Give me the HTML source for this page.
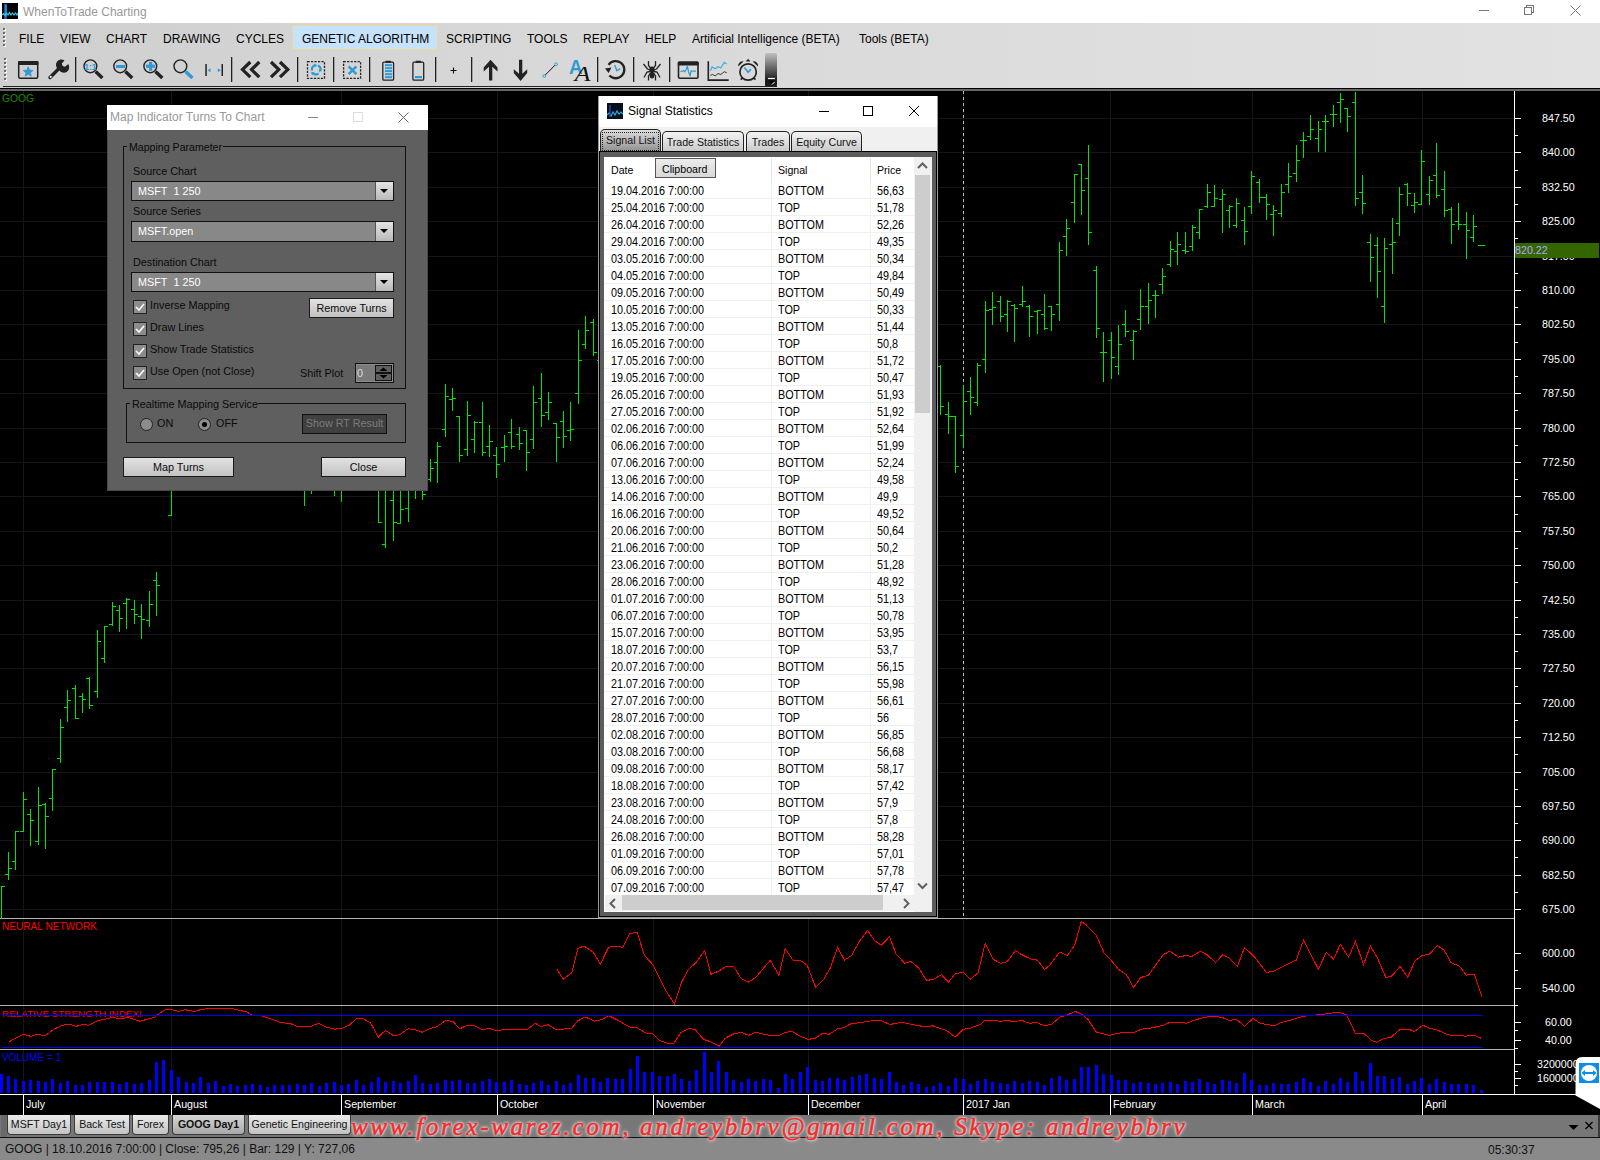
<!DOCTYPE html><html><head><meta charset="utf-8"><style>
*{margin:0;padding:0;box-sizing:border-box}
html,body{width:1600px;height:1160px;overflow:hidden;background:#000;font-family:"Liberation Sans",sans-serif;position:relative}
.a{position:absolute}
.t{position:absolute;white-space:nowrap;line-height:1}
#title{left:0;top:0;width:1600px;height:23px;background:#fff}
#menubar{left:0;top:23px;width:1600px;height:65px;background:linear-gradient(90deg,#cfcfcf 0%,#d8d8d8 35%,#e2e2e2 100%)}
.menu{font-size:12px;color:#000;top:33px}
.dlgbody{background:#5f5f5f}
.ax{font-size:10.7px;color:#fff}
.tr{font-size:10.8px;color:#000;transform:scaleY(1.1);transform-origin:0 0}
.tab{top:1115px;height:20px;border:1px solid #555;border-top:none;border-radius:0 0 4px 4px;font-size:11.5px;color:#111;text-align:center;line-height:18px;white-space:nowrap;overflow:hidden}
</style></head><body><div id="title" class="a"></div><div class="a" style="left:2px;top:3px;width:16px;height:16px;background:#000"></div><div class="t" style="left:23px;top:5.84px;font-size:12px;color:#999;">WhenToTrade Charting</div><div class="a" style="left:1479px;top:10px;width:10px;height:1px;background:#777"></div><div class="a" style="left:1526px;top:5px;width:8px;height:8px;border:1px solid #777"></div><div class="a" style="left:1524px;top:7px;width:8px;height:8px;border:1px solid #777;background:#fff"></div><svg class="a" style="left:1570px;top:5px" width="11" height="11"><path d="M0.5 0.5L10.5 10.5M10.5 0.5L0.5 10.5" stroke="#777" stroke-width="1"/></svg><div id="menubar" class="a"></div><div class="a" style="left:292px;top:25px;width:146px;height:25px;background:#c6e2fc;border:1px solid #f0d890"></div><div class="t menu" style="left:19px">FILE</div><div class="t menu" style="left:60px">VIEW</div><div class="t menu" style="left:106px">CHART</div><div class="t menu" style="left:163px">DRAWING</div><div class="t menu" style="left:236px">CYCLES</div><div class="t menu" style="left:302px">GENETIC ALGORITHM</div><div class="t menu" style="left:446px">SCRIPTING</div><div class="t menu" style="left:527px">TOOLS</div><div class="t menu" style="left:583px">REPLAY</div><div class="t menu" style="left:645px">HELP</div><div class="t menu" style="left:692px">Artificial Intelligence (BETA)</div><div class="t menu" style="left:859px">Tools (BETA)</div><svg class="a" style="left:2px;top:3px" width="16" height="16"><rect width="16" height="16" fill="#000"/><path d="M3.5 1V16" stroke="#2060d0" stroke-width="2.5"/><path d="M4 2V14" stroke="#30c8f0" stroke-width="0.8"/><path d="M0 12L1.5 10.5L3 12.5L4.5 10L6 12L7.5 9.5L9 12L10.5 10L12 12L13.5 10L15 12L16 10" stroke="#30d0f0" stroke-width="1.2" fill="none"/></svg><svg class="a" style="left:0;top:0" width="10" height="90" shape-rendering="crispEdges"><rect x="4" y="29" width="2" height="2" fill="#fff"/><rect x="3" y="28" width="2" height="2" fill="#6a6a6a"/><rect x="4" y="33" width="2" height="2" fill="#fff"/><rect x="3" y="32" width="2" height="2" fill="#6a6a6a"/><rect x="4" y="37" width="2" height="2" fill="#fff"/><rect x="3" y="36" width="2" height="2" fill="#6a6a6a"/><rect x="4" y="41" width="2" height="2" fill="#fff"/><rect x="3" y="40" width="2" height="2" fill="#6a6a6a"/><rect x="4" y="45" width="2" height="2" fill="#fff"/><rect x="3" y="44" width="2" height="2" fill="#6a6a6a"/><rect x="5" y="59" width="2" height="2" fill="#fff"/><rect x="4" y="58" width="2" height="2" fill="#6a6a6a"/><rect x="5" y="63" width="2" height="2" fill="#fff"/><rect x="4" y="62" width="2" height="2" fill="#6a6a6a"/><rect x="5" y="67" width="2" height="2" fill="#fff"/><rect x="4" y="66" width="2" height="2" fill="#6a6a6a"/><rect x="5" y="71" width="2" height="2" fill="#fff"/><rect x="4" y="70" width="2" height="2" fill="#6a6a6a"/><rect x="5" y="75" width="2" height="2" fill="#fff"/><rect x="4" y="74" width="2" height="2" fill="#6a6a6a"/><rect x="5" y="79" width="2" height="2" fill="#fff"/><rect x="4" y="78" width="2" height="2" fill="#6a6a6a"/></svg><svg class="a" style="left:0;top:0" width="800" height="90"><rect x="75" y="57" width="1.3" height="25" fill="#222"/><rect x="231" y="57" width="1.3" height="25" fill="#222"/><rect x="297" y="57" width="1.3" height="25" fill="#222"/><rect x="333" y="57" width="1.3" height="25" fill="#222"/><rect x="369" y="57" width="1.3" height="25" fill="#222"/><rect x="435" y="57" width="1.3" height="25" fill="#222"/><rect x="471" y="57" width="1.3" height="25" fill="#222"/><rect x="597" y="57" width="1.3" height="25" fill="#222"/><rect x="633" y="57" width="1.3" height="25" fill="#222"/><rect x="669" y="57" width="1.3" height="25" fill="#222"/><rect x="18.7" y="61.7" width="19" height="16.5" rx="1.5" fill="none" stroke="#222" stroke-width="1.5"/><rect x="18" y="61" width="20.5" height="4" rx="1" fill="#222"/><polygon points="28.20,66.80 29.58,70.11 33.15,70.39 30.43,72.72 31.26,76.21 28.20,74.34 25.14,76.21 25.97,72.72 23.25,70.39 26.82,70.11" fill="#2e9bd6" stroke="#2e9bd6" stroke-width="0.8" stroke-linejoin="round"/><path d="M50 77.5L60.5 67" stroke="#222" stroke-width="3.4" stroke-linecap="round"/><path d="M58.2 69.2 A5.2 5.2 0 0 1 64.5 60.4 L61.8 63.6 L62.6 66 L65 66.8 L68.2 64.1 A5.2 5.2 0 0 1 59.4 70.4 Z" fill="#222"/><circle cx="50.7" cy="76.8" r="1.1" fill="#fff"/><circle cx="90.4" cy="66.3" r="6.4" fill="none" stroke="#222" stroke-width="1.4"/><path d="M95.60000000000001 71.5L102.4 77.89999999999999" stroke="#222" stroke-width="3.4"/><text x="90.4" y="69.6" font-family="Liberation Sans" font-weight="bold" font-size="8.5" fill="#2e9bd6" text-anchor="middle">1:1</text><circle cx="120.2" cy="66.3" r="6.4" fill="none" stroke="#222" stroke-width="1.4"/><path d="M125.4 71.5L132.2 77.89999999999999" stroke="#222" stroke-width="3.4"/><rect x="116" y="65" width="9" height="3" fill="#2e9bd6"/><circle cx="150.3" cy="66.3" r="6.4" fill="none" stroke="#222" stroke-width="1.4"/><path d="M155.5 71.5L162.3 77.89999999999999" stroke="#222" stroke-width="3.4"/><rect x="146" y="64.6" width="9" height="3.2" fill="#2e9bd6"/><rect x="149" y="61.8" width="3.2" height="9" fill="#2e9bd6"/><circle cx="180.4" cy="66.3" r="6.4" fill="none" stroke="#222" stroke-width="1.4"/><path d="M185.6 71.5L192.4 77.89999999999999" stroke="#2e9bd6" stroke-width="3.4"/><rect x="205.3" y="64" width="1.5" height="12" fill="#222"/><rect x="221.5" y="64" width="1.5" height="12" fill="#222"/><path d="M207.5 70.3L210.5 68.3V72.3Z M220.8 70.3L217.8 68.3V72.3Z" fill="#2e9bd6"/><path d="M250.3 62L242.5 69.6L250.3 77.2 M259.3 62L251.5 69.6L259.3 77.2" stroke="#222" stroke-width="3.2" fill="none"/><path d="M271 62L278.8 69.6L271 77.2 M280 62L287.8 69.6L280 77.2" stroke="#222" stroke-width="3.2" fill="none"/><rect x="307.5" y="61.7" width="17" height="16.6" fill="none" stroke="#222" stroke-width="1.3" stroke-dasharray="2.2,1.3"/><path d="M312 70.5 A4.6 4.6 0 0 1 315 65.3 M318 65.6 A4.6 4.6 0 0 1 320.4 71 M318.6 73.6 A4.6 4.6 0 0 1 312.8 73" stroke="#2e9bd6" stroke-width="2.2" fill="none"/><path d="M314 63.6L317.4 65.2L314.4 67.3Z M321.8 69.6L319.6 72.6L318.6 69.4Z M312 75.4L311 71.8L314.4 72.6Z" fill="#2e9bd6"/><rect x="343.6" y="61.7" width="17" height="16.6" fill="none" stroke="#222" stroke-width="1.3" stroke-dasharray="2.2,1.3"/><path d="M348.6 66.4L356.4 74.2M356.4 66.4L348.6 74.2" stroke="#2e9bd6" stroke-width="2.4"/><rect x="382.8" y="62.2" width="10.8" height="18" rx="1.2" fill="none" stroke="#222" stroke-width="1.3"/><rect x="385.5" y="60.8" width="5.5" height="2" rx="0.6" fill="#222"/><rect x="412.9" y="62.2" width="10.8" height="18" rx="1.2" fill="none" stroke="#222" stroke-width="1.3"/><rect x="415.59999999999997" y="60.8" width="5.5" height="2" rx="0.6" fill="#222"/><rect x="385" y="64.2" width="7" height="2" fill="#2e9bd6"/><rect x="385" y="67.2" width="7" height="2" fill="#2e9bd6"/><rect x="385" y="70.1" width="7" height="2" fill="#2e9bd6"/><rect x="385" y="73.2" width="7" height="2" fill="#2e9bd6"/><rect x="385" y="76.2" width="7" height="2" fill="#2e9bd6"/><rect x="415" y="76" width="7" height="2.2" fill="#2e9bd6"/><path d="M450.5 70.5H456.5M453.5 67.5V73.5" stroke="#111" stroke-width="1.1"/><path d="M490.6 59.7L497.5 67.6L497.5 71.5L492.3 66.8V80.5H489V66.8L483.7 71.5V67.6Z" fill="#222"/><path d="M520.6 80.9L527.2 73V69.2L522.3 73.8V59.7H519V73.8L513.8 69.2V73Z" fill="#222"/><path d="M545.3 75L555 65.2" stroke="#111" stroke-width="1"/><circle cx="544.3" cy="76" r="1.4" fill="none" stroke="#2e9bd6" stroke-width="0.9"/><circle cx="556.1" cy="64.2" r="1.4" fill="none" stroke="#2e9bd6" stroke-width="0.9"/><text x="569" y="73.8" font-family="Liberation Sans" font-weight="bold" font-size="20" fill="#2e9bd6" textLength="13.5" lengthAdjust="spacingAndGlyphs">A</text><text x="574.5" y="80.5" font-family="Liberation Serif" font-style="italic" font-size="22" fill="#111" textLength="16" lengthAdjust="spacingAndGlyphs">A</text><path d="M609.4 75.5 A8.6 8.6 0 1 0 608.6 64.8" stroke="#222" stroke-width="2.3" fill="none"/><path d="M605 68.5L611.5 67.5L608.6 73Z" fill="#222"/><path d="M614.7 65.1L616.9 70.8L620.3 68.6" stroke="#2e9bd6" stroke-width="1.4" fill="none"/><ellipse cx="652" cy="69.5" rx="2.6" ry="3" fill="#222"/><ellipse cx="652" cy="75" rx="2.4" ry="3.6" fill="#222"/><path d="M648.5 61V65.5L651 68.5 M655.5 61V65.5L653 68.5 M643.5 64L647.5 69L650 70 M660.5 64L656.5 69L654 70 M644 77.5L647 72L650 71.5 M660 77.5L657 72L654 71.5 M648.5 80.5V76L650.5 73 M655.5 80.5V76L653.5 73" stroke="#222" stroke-width="1.3" fill="none"/><rect x="678.5" y="62.2" width="19.5" height="16" rx="1.2" fill="none" stroke="#222" stroke-width="1.6"/><rect x="677.8" y="61.4" width="20.8" height="4" rx="1" fill="#222"/><path d="M680.5 71.5L682.5 71.2L683.7 70.5L684.8 71.8L686 69.8L687.4 66.5L688.6 72L690 75.5L691.2 70.8L692.5 71.2L696 71.2" stroke="#2e9bd6" stroke-width="1.2" fill="none"/><path d="M708.3 61.2V80.1H728.7" stroke="#222" stroke-width="1.6" fill="none"/><path d="M710.4 70.8L712.1 66.9L715.2 68.8L718 66.6L720.8 68L724.2 62.4L726.7 64.1" stroke="#3ab0e0" stroke-width="1.2" fill="none"/><path d="M710.4 75.3L712.7 74.5L715.2 75.9L718 73.6L720.8 74.5L724.2 71.7L726.7 72.8" stroke="#222" stroke-width="0.9" fill="none"/><circle cx="748.1" cy="72" r="8.2" fill="none" stroke="#222" stroke-width="1.7"/><path d="M738.2 66.5A4.5 4.5 0 0 1 743.5 61.4Z M758 66.5A4.5 4.5 0 0 0 752.7 61.4Z" fill="#222"/><path d="M746.5 61H749.7L748.1 59.5Z" fill="#222" stroke="#222" stroke-width="1"/><path d="M742.6 77.5L740.8 79.6 M753.6 77.5L755.4 79.6" stroke="#222" stroke-width="1.8"/><path d="M744.4 67.4L748.1 72.2L750.9 69.1" stroke="#2e9bd6" stroke-width="1.6" fill="none"/></svg><div class="a" style="left:765px;top:53px;width:12px;height:34px;background:linear-gradient(#c0c0c0,#1c1c1c 80%);border-radius:2px"></div><svg class="a" style="left:765px;top:76px" width="12" height="11"><path d="M3 2.5H10" stroke="#fff" stroke-width="1.2"/><path d="M3.5 4.5H9.5L6.5 8Z" fill="#000"/><path d="M7 8.5L9.5 6" stroke="#fff" stroke-width="1"/></svg><div class="a" style="left:3px;top:86px;width:774px;height:1px;background:#222"></div><div class="a" style="left:0;top:88px;width:1600px;height:1px;background:#000"></div><div class="a" style="left:0;top:89px;width:1600px;height:2px;background:#666"></div><svg class="a" style="left:0;top:0" width="1600" height="1160" shape-rendering="crispEdges"><rect x="0" y="118" width="1514" height="1" fill="#151515"/><rect x="0" y="152" width="1514" height="1" fill="#151515"/><rect x="0" y="187" width="1514" height="1" fill="#151515"/><rect x="0" y="221" width="1514" height="1" fill="#151515"/><rect x="0" y="256" width="1514" height="1" fill="#151515"/><rect x="0" y="290" width="1514" height="1" fill="#151515"/><rect x="0" y="324" width="1514" height="1" fill="#151515"/><rect x="0" y="359" width="1514" height="1" fill="#151515"/><rect x="0" y="393" width="1514" height="1" fill="#151515"/><rect x="0" y="428" width="1514" height="1" fill="#151515"/><rect x="0" y="462" width="1514" height="1" fill="#151515"/><rect x="0" y="496" width="1514" height="1" fill="#151515"/><rect x="0" y="531" width="1514" height="1" fill="#151515"/><rect x="0" y="565" width="1514" height="1" fill="#151515"/><rect x="0" y="600" width="1514" height="1" fill="#151515"/><rect x="0" y="634" width="1514" height="1" fill="#151515"/><rect x="0" y="668" width="1514" height="1" fill="#151515"/><rect x="0" y="703" width="1514" height="1" fill="#151515"/><rect x="0" y="737" width="1514" height="1" fill="#151515"/><rect x="0" y="772" width="1514" height="1" fill="#151515"/><rect x="0" y="806" width="1514" height="1" fill="#151515"/><rect x="0" y="840" width="1514" height="1" fill="#151515"/><rect x="0" y="875" width="1514" height="1" fill="#151515"/><rect x="0" y="909" width="1514" height="1" fill="#151515"/><rect x="23" y="91" width="1" height="1003" fill="#151515"/><rect x="171" y="91" width="1" height="1003" fill="#151515"/><rect x="341" y="91" width="1" height="1003" fill="#151515"/><rect x="497" y="91" width="1" height="1003" fill="#151515"/><rect x="653" y="91" width="1" height="1003" fill="#151515"/><rect x="808" y="91" width="1" height="1003" fill="#151515"/><rect x="963" y="91" width="1" height="1003" fill="#151515"/><rect x="1110" y="91" width="1" height="1003" fill="#151515"/><rect x="1252" y="91" width="1" height="1003" fill="#151515"/><rect x="1422" y="91" width="1" height="1003" fill="#151515"/><rect x="1514" y="91" width="1" height="1003" fill="#fff"/><rect x="1514" y="118" width="7" height="1" fill="#fff"/><rect x="1514" y="135" width="4" height="1" fill="#fff"/><rect x="1514" y="152" width="7" height="1" fill="#fff"/><rect x="1514" y="170" width="4" height="1" fill="#fff"/><rect x="1514" y="187" width="7" height="1" fill="#fff"/><rect x="1514" y="204" width="4" height="1" fill="#fff"/><rect x="1514" y="221" width="7" height="1" fill="#fff"/><rect x="1514" y="238" width="4" height="1" fill="#fff"/><rect x="1514" y="256" width="7" height="1" fill="#fff"/><rect x="1514" y="273" width="4" height="1" fill="#fff"/><rect x="1514" y="290" width="7" height="1" fill="#fff"/><rect x="1514" y="307" width="4" height="1" fill="#fff"/><rect x="1514" y="324" width="7" height="1" fill="#fff"/><rect x="1514" y="342" width="4" height="1" fill="#fff"/><rect x="1514" y="359" width="7" height="1" fill="#fff"/><rect x="1514" y="376" width="4" height="1" fill="#fff"/><rect x="1514" y="393" width="7" height="1" fill="#fff"/><rect x="1514" y="410" width="4" height="1" fill="#fff"/><rect x="1514" y="428" width="7" height="1" fill="#fff"/><rect x="1514" y="445" width="4" height="1" fill="#fff"/><rect x="1514" y="462" width="7" height="1" fill="#fff"/><rect x="1514" y="479" width="4" height="1" fill="#fff"/><rect x="1514" y="496" width="7" height="1" fill="#fff"/><rect x="1514" y="514" width="4" height="1" fill="#fff"/><rect x="1514" y="531" width="7" height="1" fill="#fff"/><rect x="1514" y="548" width="4" height="1" fill="#fff"/><rect x="1514" y="565" width="7" height="1" fill="#fff"/><rect x="1514" y="582" width="4" height="1" fill="#fff"/><rect x="1514" y="600" width="7" height="1" fill="#fff"/><rect x="1514" y="617" width="4" height="1" fill="#fff"/><rect x="1514" y="634" width="7" height="1" fill="#fff"/><rect x="1514" y="651" width="4" height="1" fill="#fff"/><rect x="1514" y="668" width="7" height="1" fill="#fff"/><rect x="1514" y="686" width="4" height="1" fill="#fff"/><rect x="1514" y="703" width="7" height="1" fill="#fff"/><rect x="1514" y="720" width="4" height="1" fill="#fff"/><rect x="1514" y="737" width="7" height="1" fill="#fff"/><rect x="1514" y="754" width="4" height="1" fill="#fff"/><rect x="1514" y="772" width="7" height="1" fill="#fff"/><rect x="1514" y="789" width="4" height="1" fill="#fff"/><rect x="1514" y="806" width="7" height="1" fill="#fff"/><rect x="1514" y="823" width="4" height="1" fill="#fff"/><rect x="1514" y="840" width="7" height="1" fill="#fff"/><rect x="1514" y="857" width="4" height="1" fill="#fff"/><rect x="1514" y="875" width="7" height="1" fill="#fff"/><rect x="1514" y="892" width="4" height="1" fill="#fff"/><rect x="1514" y="909" width="7" height="1" fill="#fff"/><rect x="1514" y="953" width="7" height="1" fill="#fff"/><rect x="1514" y="988" width="7" height="1" fill="#fff"/><rect x="1514" y="1022" width="7" height="1" fill="#fff"/><rect x="1514" y="1040" width="7" height="1" fill="#fff"/><rect x="1514" y="1064" width="7" height="1" fill="#fff"/><rect x="1514" y="1078" width="7" height="1" fill="#fff"/><rect x="1514" y="970" width="4" height="1" fill="#fff"/><rect x="1514" y="1005" width="4" height="1" fill="#fff"/><rect x="1514" y="1030" width="4" height="1" fill="#fff"/><rect x="1514" y="1048" width="4" height="1" fill="#fff"/><rect x="1514" y="1071" width="4" height="1" fill="#fff"/><rect x="1514" y="1085" width="4" height="1" fill="#fff"/><rect x="0" y="918" width="1514" height="1" fill="#b4b4b4"/><rect x="0" y="1005" width="1514" height="1" fill="#b4b4b4"/><rect x="0" y="1049" width="1514" height="1" fill="#b4b4b4"/><rect x="2" y="1015" width="1481" height="1" fill="#0000ff"/><rect x="2" y="1047" width="1481" height="1" fill="#0000ff"/><rect x="0" y="1094" width="1600" height="1" fill="#fff"/><rect x="23" y="1095" width="1" height="20" fill="#fff"/><rect x="171" y="1095" width="1" height="20" fill="#fff"/><rect x="341" y="1095" width="1" height="20" fill="#fff"/><rect x="497" y="1095" width="1" height="20" fill="#fff"/><rect x="653" y="1095" width="1" height="20" fill="#fff"/><rect x="808" y="1095" width="1" height="20" fill="#fff"/><rect x="963" y="1095" width="1" height="20" fill="#fff"/><rect x="1110" y="1095" width="1" height="20" fill="#fff"/><rect x="1252" y="1095" width="1" height="20" fill="#fff"/><rect x="1422" y="1095" width="1" height="20" fill="#fff"/><line x1="963.5" y1="91" x2="963.5" y2="918" stroke="#bdbdbd" stroke-width="1" stroke-dasharray="3,3" shape-rendering="crispEdges"/></svg><div class="t ax" style="left:1542px;top:113px">847.50</div><div class="t ax" style="left:1542px;top:147px">840.00</div><div class="t ax" style="left:1542px;top:182px">832.50</div><div class="t ax" style="left:1542px;top:216px">825.00</div><div class="t ax" style="left:1542px;top:251px">817.50</div><div class="t ax" style="left:1542px;top:285px">810.00</div><div class="t ax" style="left:1542px;top:319px">802.50</div><div class="t ax" style="left:1542px;top:354px">795.00</div><div class="t ax" style="left:1542px;top:388px">787.50</div><div class="t ax" style="left:1542px;top:423px">780.00</div><div class="t ax" style="left:1542px;top:457px">772.50</div><div class="t ax" style="left:1542px;top:491px">765.00</div><div class="t ax" style="left:1542px;top:526px">757.50</div><div class="t ax" style="left:1542px;top:560px">750.00</div><div class="t ax" style="left:1542px;top:595px">742.50</div><div class="t ax" style="left:1542px;top:629px">735.00</div><div class="t ax" style="left:1542px;top:663px">727.50</div><div class="t ax" style="left:1542px;top:698px">720.00</div><div class="t ax" style="left:1542px;top:732px">712.50</div><div class="t ax" style="left:1542px;top:767px">705.00</div><div class="t ax" style="left:1542px;top:801px">697.50</div><div class="t ax" style="left:1542px;top:835px">690.00</div><div class="t ax" style="left:1542px;top:870px">682.50</div><div class="t ax" style="left:1542px;top:904px">675.00</div><div class="t ax" style="left:1542px;top:948px">600.00</div><div class="t ax" style="left:1542px;top:983px">540.00</div><div class="t ax" style="left:1545px;top:1017px">60.00</div><div class="t ax" style="left:1545px;top:1035px">40.00</div><div class="t ax" style="left:1537px;top:1059px">3200000</div><div class="t ax" style="left:1537px;top:1073px">1600000</div><div class="a" style="left:1515px;top:243px;width:84px;height:15px;background:#336600"></div><div class="t" style="left:1515px;top:245px;font-size:10.7px;color:#b4a8ff">820.22</div><div class="t" style="left:2px;top:93.5px;font-size:10.3px;color:#1f8a00">GOOG</div><div class="t" style="left:2px;top:921.5px;font-size:10.1px;color:#ff0000">NEURAL NETWORK</div><div class="t" style="left:2px;top:1008.5px;font-size:9.9px;color:#ff0000">RELATIVE STRENGTH INDEX!</div><div class="t" style="left:2px;top:1052.5px;font-size:10px;color:#0000ff">VOLUME = 1</div><div class="t" style="left:26px;top:1099px;font-size:10.7px;color:#fff">July</div><div class="t" style="left:174px;top:1099px;font-size:10.7px;color:#fff">August</div><div class="t" style="left:344px;top:1099px;font-size:10.7px;color:#fff">September</div><div class="t" style="left:500px;top:1099px;font-size:10.7px;color:#fff">October</div><div class="t" style="left:656px;top:1099px;font-size:10.7px;color:#fff">November</div><div class="t" style="left:811px;top:1099px;font-size:10.7px;color:#fff">December</div><div class="t" style="left:966px;top:1099px;font-size:10.7px;color:#fff">2017 Jan</div><div class="t" style="left:1113px;top:1099px;font-size:10.7px;color:#fff">February</div><div class="t" style="left:1255px;top:1099px;font-size:10.7px;color:#fff">March</div><div class="t" style="left:1425px;top:1099px;font-size:10.7px;color:#fff">April</div><svg class="a" style="left:0;top:0" width="1600" height="1160" shape-rendering="crispEdges"><path d="M1.5 886V919M2 886.5H5M8.5 852V880M5 874.5H8M9 868.5H12M15.5 831V870M12 861.5H15M16 831.5H19M23.5 792V832M20 831.5H23M24 799.5H27M30.5 809V846M27 814.5H30M31 820.5H34M38.5 787V845M35 841.5H38M39 805.5H42M45.5 803V849M42 804.5H45M46 816.5H49M52.5 769V811M49 798.5H52M53 769.5H56M60.5 719V763M57 758.5H60M61 727.5H64M67.5 690V722M64 707.5H67M68 700.5H71M75.5 685V719M72 688.5H75M76 718.5H79M82.5 693V713M79 696.5H82M83 699.5H86M89.5 677V709M86 678.5H89M90 705.5H93M97.5 630V698M94 691.5H97M98 641.5H101M104.5 626V663M101 658.5H104M105 626.5H108M112.5 602V626M109 624.5H112M113 606.5H116M119.5 605V632M116 610.5H119M120 618.5H123M126.5 598V629M123 603.5H126M127 599.5H130M134.5 600V624M131 609.5H134M135 614.5H138M141.5 604V639M138 616.5H141M142 619.5H145M149.5 591V627M146 620.5H149M150 604.5H153M156.5 572V616M153 580.5H156M157 585.5H160M171.5 460V516M168 515.5H171M304.5 440V506M311.5 440V494M334.5 440V496M341.5 440V502M378.5 440V523M379 522.5H382M385.5 440V548M382 544.5H385M393.5 470V541M390 500.5H393M394 522.5H397M400.5 440V524M397 523.5H400M401 509.5H404M408.5 440V522M405 508.5H408M415.5 440V499M422.5 440V500M423 494.5H426M430.5 459V482M427 479.5H430M431 468.5H434M437.5 442V483M434 462.5H437M438 446.5H441M445.5 384V437M442 429.5H445M446 396.5H449M452.5 388V411M449 399.5H452M453 398.5H456M459.5 416V462M456 416.5H459M460 455.5H463M467.5 401V456M464 449.5H467M468 415.5H471M474.5 421V453M471 439.5H474M475 422.5H478M482.5 402V456M479 422.5H482M483 452.5H486M489.5 425V457M486 446.5H489M490 441.5H493M496.5 447V478M493 455.5H496M497 464.5H500M504.5 435V462M501 447.5H504M505 446.5H508M511.5 419V449M508 432.5H511M512 446.5H515M519.5 427V450M516 434.5H519M520 443.5H523M526.5 430V471M523 430.5H526M527 452.5H530M533.5 386V449M530 439.5H533M534 402.5H537M541.5 373V427M538 398.5H541M542 415.5H545M548.5 392V420M545 412.5H548M549 402.5H552M556.5 423V462M553 423.5H556M557 437.5H560M563.5 411V448M560 421.5H563M564 436.5H567M570.5 402V441M567 430.5H570M571 429.5H574M578.5 330V404M575 393.5H578M579 360.5H582M585.5 316V349M582 344.5H585M586 330.5H589M593.5 319V356M590 322.5H593M594 352.5H597M600.5 340V376M597 360.5H600M601 360.5H604M940.5 365V415M937 366.5H940M941 406.5H944M948.5 402V434M945 414.5H948M949 416.5H952M955.5 416V473M952 416.5H955M956 466.5H959M963.5 385V448M960 435.5H963M964 401.5H967M970.5 377V415M967 391.5H970M971 397.5H974M977.5 363V406M974 402.5H977M978 365.5H981M985.5 301V373M982 359.5H985M986 310.5H989M992.5 292V325M989 309.5H992M993 307.5H996M1000.5 296V322M997 301.5H1000M1001 316.5H1004M1007.5 300V332M1004 314.5H1007M1008 301.5H1011M1014.5 304V342M1011 305.5H1014M1015 308.5H1018M1022.5 286V307M1019 304.5H1022M1023 301.5H1026M1029.5 305V337M1026 306.5H1029M1030 316.5H1033M1037.5 310V334M1034 311.5H1037M1038 310.5H1041M1044.5 294V330M1041 314.5H1044M1045 328.5H1048M1051.5 306V331M1048 306.5H1051M1052 314.5H1055M1059.5 242V321M1056 304.5H1059M1060 250.5H1063M1066.5 219V256M1063 236.5H1066M1067 228.5H1070M1074.5 174V223M1071 202.5H1074M1075 174.5H1078M1081.5 164V215M1078 164.5H1081M1082 190.5H1085M1088.5 145V245M1085 178.5H1088M1089 232.5H1092M1096.5 266V338M1093 270.5H1096M1097 328.5H1100M1103.5 332V382M1100 352.5H1103M1104 352.5H1107M1111.5 332V379M1108 340.5H1111M1112 357.5H1115M1118.5 325V375M1115 366.5H1118M1119 344.5H1122M1125.5 310V337M1122 324.5H1125M1126 331.5H1129M1133.5 330V360M1130 340.5H1133M1134 331.5H1137M1140.5 289V330M1137 319.5H1140M1141 306.5H1144M1148.5 283V324M1145 306.5H1148M1149 300.5H1152M1155.5 290V318M1152 295.5H1155M1156 295.5H1159M1162.5 268V294M1159 284.5H1162M1163 276.5H1166M1170.5 241V267M1167 264.5H1170M1171 249.5H1174M1177.5 232V265M1174 251.5H1177M1178 244.5H1181M1185.5 232V254M1182 250.5H1185M1186 251.5H1189M1192.5 225V251M1189 246.5H1192M1193 227.5H1196M1199.5 209V239M1196 232.5H1199M1200 209.5H1203M1207.5 184V208M1204 206.5H1207M1208 192.5H1211M1214.5 185V207M1211 206.5H1214M1215 198.5H1218M1222.5 189V233M1219 199.5H1222M1223 194.5H1226M1229.5 205V228M1226 210.5H1229M1230 206.5H1233M1236.5 198V228M1233 225.5H1236M1237 203.5H1240M1244.5 207V245M1241 220.5H1244M1245 231.5H1248M1251.5 171V214M1248 206.5H1251M1252 176.5H1255M1259.5 179V203M1256 182.5H1259M1260 197.5H1263M1266.5 194V220M1263 197.5H1266M1267 204.5H1270M1273.5 205V236M1270 214.5H1273M1274 210.5H1277M1281.5 184V217M1278 213.5H1281M1282 192.5H1285M1288.5 163V193M1285 184.5H1288M1289 176.5H1292M1296.5 145V182M1293 173.5H1296M1297 160.5H1300M1303.5 132V158M1300 140.5H1303M1304 140.5H1307M1310.5 115V140M1307 136.5H1310M1311 129.5H1314M1318.5 121V152M1315 138.5H1318M1319 129.5H1322M1325.5 115V152M1322 121.5H1325M1326 121.5H1329M1333.5 105V127M1330 114.5H1333M1334 114.5H1337M1340.5 93V123M1337 102.5H1340M1341 99.5H1344M1347.5 108V132M1344 108.5H1347M1348 116.5H1351M1355.5 92V206M1352 102.5H1355M1356 198.5H1359M1362.5 175V214M1359 192.5H1362M1363 203.5H1366M1370.5 234V282M1367 242.5H1370M1371 257.5H1374M1377.5 237V298M1374 245.5H1377M1378 271.5H1381M1384.5 238V323M1381 306.5H1384M1385 248.5H1388M1392.5 218V274M1389 244.5H1392M1393 242.5H1396M1399.5 187V236M1396 223.5H1399M1400 194.5H1403M1407.5 183V206M1404 184.5H1407M1408 193.5H1411M1414.5 193V213M1411 205.5H1414M1415 202.5H1418M1421.5 150V205M1418 204.5H1421M1422 161.5H1425M1429.5 176V205M1426 194.5H1429M1430 180.5H1433M1436.5 143V198M1433 175.5H1436M1437 195.5H1440M1444.5 171V217M1441 189.5H1444M1445 210.5H1448M1451.5 207V244M1448 209.5H1451M1452 224.5H1455M1458.5 203V230M1455 221.5H1458M1459 224.5H1462M1466.5 212V259M1463 224.5H1466M1467 230.5H1470M1473.5 215V242M1470 237.5H1473M1474 226.5H1477M1481.5 245V246M1478 245.5H1481M1482 245.5H1485" stroke="#00e600" stroke-width="1" fill="none"/><g fill="#0000ff"><rect x="0" y="1074" width="3" height="19"/><rect x="7" y="1076" width="3" height="17"/><rect x="14" y="1079" width="3" height="14"/><rect x="22" y="1081" width="3" height="12"/><rect x="29" y="1080" width="3" height="13"/><rect x="37" y="1081" width="3" height="12"/><rect x="44" y="1082" width="3" height="11"/><rect x="51" y="1079" width="3" height="14"/><rect x="59" y="1083" width="3" height="10"/><rect x="66" y="1081" width="3" height="12"/><rect x="74" y="1085" width="3" height="8"/><rect x="81" y="1085" width="3" height="8"/><rect x="88" y="1082" width="3" height="11"/><rect x="96" y="1082" width="3" height="11"/><rect x="103" y="1082" width="3" height="11"/><rect x="111" y="1082" width="3" height="11"/><rect x="118" y="1084" width="3" height="9"/><rect x="125" y="1082" width="3" height="11"/><rect x="133" y="1084" width="3" height="9"/><rect x="140" y="1083" width="3" height="10"/><rect x="148" y="1080" width="3" height="13"/><rect x="155" y="1062" width="3" height="31"/><rect x="162" y="1060" width="3" height="33"/><rect x="170" y="1070" width="3" height="23"/><rect x="177" y="1077" width="3" height="16"/><rect x="185" y="1082" width="3" height="11"/><rect x="192" y="1083" width="3" height="10"/><rect x="199" y="1077" width="3" height="16"/><rect x="207" y="1083" width="3" height="10"/><rect x="214" y="1081" width="3" height="12"/><rect x="222" y="1086" width="3" height="7"/><rect x="229" y="1084" width="3" height="9"/><rect x="236" y="1086" width="3" height="7"/><rect x="244" y="1085" width="3" height="8"/><rect x="251" y="1084" width="3" height="9"/><rect x="259" y="1085" width="3" height="8"/><rect x="266" y="1087" width="3" height="6"/><rect x="273" y="1085" width="3" height="8"/><rect x="281" y="1085" width="3" height="8"/><rect x="288" y="1085" width="3" height="8"/><rect x="296" y="1084" width="3" height="9"/><rect x="303" y="1085" width="3" height="8"/><rect x="310" y="1083" width="3" height="10"/><rect x="318" y="1086" width="3" height="7"/><rect x="325" y="1083" width="3" height="10"/><rect x="333" y="1082" width="3" height="11"/><rect x="340" y="1085" width="3" height="8"/><rect x="347" y="1084" width="3" height="9"/><rect x="355" y="1080" width="3" height="13"/><rect x="362" y="1085" width="3" height="8"/><rect x="370" y="1082" width="3" height="11"/><rect x="377" y="1077" width="3" height="16"/><rect x="384" y="1082" width="3" height="11"/><rect x="392" y="1081" width="3" height="12"/><rect x="399" y="1083" width="3" height="10"/><rect x="407" y="1081" width="3" height="12"/><rect x="414" y="1075" width="3" height="18"/><rect x="421" y="1083" width="3" height="10"/><rect x="429" y="1084" width="3" height="9"/><rect x="436" y="1083" width="3" height="10"/><rect x="444" y="1080" width="3" height="13"/><rect x="451" y="1081" width="3" height="12"/><rect x="458" y="1080" width="3" height="13"/><rect x="466" y="1083" width="3" height="10"/><rect x="473" y="1083" width="3" height="10"/><rect x="481" y="1081" width="3" height="12"/><rect x="488" y="1079" width="3" height="14"/><rect x="495" y="1082" width="3" height="11"/><rect x="503" y="1082" width="3" height="11"/><rect x="510" y="1080" width="3" height="13"/><rect x="518" y="1084" width="3" height="9"/><rect x="525" y="1085" width="3" height="8"/><rect x="532" y="1083" width="3" height="10"/><rect x="540" y="1081" width="3" height="12"/><rect x="547" y="1085" width="3" height="8"/><rect x="555" y="1081" width="3" height="12"/><rect x="562" y="1085" width="3" height="8"/><rect x="569" y="1083" width="3" height="10"/><rect x="577" y="1075" width="3" height="18"/><rect x="584" y="1078" width="3" height="15"/><rect x="592" y="1078" width="3" height="15"/><rect x="599" y="1082" width="3" height="11"/><rect x="606" y="1078" width="3" height="15"/><rect x="614" y="1079" width="3" height="14"/><rect x="621" y="1079" width="3" height="14"/><rect x="629" y="1069" width="3" height="24"/><rect x="636" y="1056" width="3" height="37"/><rect x="643" y="1072" width="3" height="21"/><rect x="651" y="1072" width="3" height="21"/><rect x="658" y="1076" width="3" height="17"/><rect x="666" y="1076" width="3" height="17"/><rect x="673" y="1074" width="3" height="19"/><rect x="680" y="1079" width="3" height="14"/><rect x="688" y="1081" width="3" height="12"/><rect x="695" y="1070" width="3" height="23"/><rect x="703" y="1052" width="3" height="41"/><rect x="710" y="1072" width="3" height="21"/><rect x="717" y="1061" width="3" height="32"/><rect x="725" y="1072" width="3" height="21"/><rect x="732" y="1080" width="3" height="13"/><rect x="740" y="1082" width="3" height="11"/><rect x="747" y="1079" width="3" height="14"/><rect x="754" y="1081" width="3" height="12"/><rect x="762" y="1079" width="3" height="14"/><rect x="769" y="1080" width="3" height="13"/><rect x="777" y="1088" width="3" height="5"/><rect x="784" y="1074" width="3" height="19"/><rect x="791" y="1079" width="3" height="14"/><rect x="799" y="1072" width="3" height="21"/><rect x="806" y="1067" width="3" height="26"/><rect x="814" y="1080" width="3" height="13"/><rect x="821" y="1081" width="3" height="12"/><rect x="828" y="1078" width="3" height="15"/><rect x="836" y="1078" width="3" height="15"/><rect x="843" y="1080" width="3" height="13"/><rect x="851" y="1077" width="3" height="16"/><rect x="858" y="1075" width="3" height="18"/><rect x="865" y="1074" width="3" height="19"/><rect x="873" y="1078" width="3" height="15"/><rect x="880" y="1079" width="3" height="14"/><rect x="888" y="1072" width="3" height="21"/><rect x="895" y="1082" width="3" height="11"/><rect x="902" y="1085" width="3" height="8"/><rect x="910" y="1082" width="3" height="11"/><rect x="917" y="1084" width="3" height="9"/><rect x="925" y="1087" width="3" height="6"/><rect x="932" y="1086" width="3" height="7"/><rect x="939" y="1083" width="3" height="10"/><rect x="947" y="1086" width="3" height="7"/><rect x="954" y="1078" width="3" height="15"/><rect x="962" y="1079" width="3" height="14"/><rect x="969" y="1084" width="3" height="9"/><rect x="976" y="1081" width="3" height="12"/><rect x="984" y="1079" width="3" height="14"/><rect x="991" y="1082" width="3" height="11"/><rect x="999" y="1083" width="3" height="10"/><rect x="1006" y="1084" width="3" height="9"/><rect x="1013" y="1081" width="3" height="12"/><rect x="1021" y="1083" width="3" height="10"/><rect x="1028" y="1081" width="3" height="12"/><rect x="1036" y="1082" width="3" height="11"/><rect x="1043" y="1085" width="3" height="8"/><rect x="1050" y="1078" width="3" height="15"/><rect x="1058" y="1076" width="3" height="17"/><rect x="1065" y="1080" width="3" height="13"/><rect x="1073" y="1079" width="3" height="14"/><rect x="1080" y="1067" width="3" height="26"/><rect x="1087" y="1067" width="3" height="26"/><rect x="1095" y="1065" width="3" height="28"/><rect x="1102" y="1074" width="3" height="19"/><rect x="1110" y="1075" width="3" height="18"/><rect x="1117" y="1080" width="3" height="13"/><rect x="1124" y="1080" width="3" height="13"/><rect x="1132" y="1083" width="3" height="10"/><rect x="1139" y="1082" width="3" height="11"/><rect x="1147" y="1083" width="3" height="10"/><rect x="1154" y="1084" width="3" height="9"/><rect x="1161" y="1083" width="3" height="10"/><rect x="1169" y="1082" width="3" height="11"/><rect x="1176" y="1084" width="3" height="9"/><rect x="1184" y="1081" width="3" height="12"/><rect x="1191" y="1082" width="3" height="11"/><rect x="1198" y="1079" width="3" height="14"/><rect x="1206" y="1082" width="3" height="11"/><rect x="1213" y="1084" width="3" height="9"/><rect x="1221" y="1080" width="3" height="13"/><rect x="1228" y="1081" width="3" height="12"/><rect x="1235" y="1083" width="3" height="10"/><rect x="1243" y="1073" width="3" height="20"/><rect x="1250" y="1080" width="3" height="13"/><rect x="1258" y="1085" width="3" height="8"/><rect x="1265" y="1085" width="3" height="8"/><rect x="1272" y="1083" width="3" height="10"/><rect x="1280" y="1084" width="3" height="9"/><rect x="1287" y="1084" width="3" height="9"/><rect x="1295" y="1082" width="3" height="11"/><rect x="1302" y="1078" width="3" height="15"/><rect x="1309" y="1082" width="3" height="11"/><rect x="1317" y="1086" width="3" height="7"/><rect x="1324" y="1081" width="3" height="12"/><rect x="1332" y="1084" width="3" height="9"/><rect x="1339" y="1078" width="3" height="15"/><rect x="1346" y="1082" width="3" height="11"/><rect x="1354" y="1072" width="3" height="21"/><rect x="1361" y="1081" width="3" height="12"/><rect x="1369" y="1063" width="3" height="30"/><rect x="1376" y="1076" width="3" height="17"/><rect x="1383" y="1076" width="3" height="17"/><rect x="1391" y="1079" width="3" height="14"/><rect x="1398" y="1077" width="3" height="16"/><rect x="1406" y="1084" width="3" height="9"/><rect x="1413" y="1081" width="3" height="12"/><rect x="1420" y="1078" width="3" height="15"/><rect x="1428" y="1084" width="3" height="9"/><rect x="1435" y="1079" width="3" height="14"/><rect x="1443" y="1082" width="3" height="11"/><rect x="1450" y="1084" width="3" height="9"/><rect x="1457" y="1084" width="3" height="9"/><rect x="1465" y="1084" width="3" height="9"/><rect x="1472" y="1085" width="3" height="8"/><rect x="1480" y="1090" width="3" height="3"/></g></svg><svg class="a" style="left:0;top:0" width="1600" height="1160"><polyline points="557.0,969.3 563.3,979.3 571.9,972.7 577.8,948.9 580.5,947.2 584.7,946.4 593.4,952.4 600.3,964.1 608.6,947.4 613.3,946.4 618.4,946.4 622.7,947.4 629.7,933.6 633.6,932.8 637.2,932.4 644.5,955.5 653.1,964.9 666.4,991.4 674.5,1004.0 681.3,982.8 688.3,969.6 696.1,962.5 704.7,950.5 710.9,974.3 719.5,970.8 725.8,966.4 733.6,966.4 741.4,978.9 748.4,982.1 755.5,977.8 770.3,960.2 778.9,975.5 785.2,948.5 793.0,960.2 800.0,960.2 807.0,964.9 815.6,987.1 823.4,979.7 830.5,967.7 837.5,947.4 844.5,960.2 851.6,955.5 859.4,941.4 867.5,930.5 874.7,940.7 881.3,945.3 889.4,936.8 896.1,953.9 904.7,963.3 910.9,961.4 918.8,968.0 926.6,980.5 933.6,979.3 941.4,974.6 948.4,982.1 955.5,973.5 963.3,972.4 970.3,979.3 978.1,972.7 985.2,943.3 993.4,959.4 1000.8,963.3 1007.0,961.8 1015.6,950.5 1020.3,953.9 1030.5,958.9 1037.5,960.2 1044.5,969.6 1050.0,964.9 1059.7,952.1 1067.2,955.5 1074.7,945.3 1081.3,921.4 1085.9,924.6 1096.1,934.9 1104.4,953.6 1112.5,961.8 1118.0,968.8 1126.6,975.0 1133.6,987.5 1140.9,977.4 1148.4,975.5 1156.3,964.1 1163.3,954.7 1170.0,951.1 1178.4,957.1 1185.9,955.5 1191.9,956.4 1200.3,951.3 1207.0,954.7 1215.6,962.5 1222.7,954.7 1228.9,957.8 1237.5,966.4 1244.5,947.4 1254.7,957.1 1266.4,972.4 1273.4,971.4 1284.4,965.7 1296.1,960.2 1303.5,940.3 1318.4,969.2 1326.4,952.4 1333.5,959.0 1340.4,944.4 1348.6,957.2 1355.5,941.4 1363.5,964.5 1370.4,946.2 1377.5,957.9 1385.8,977.4 1391.3,976.5 1400.2,966.4 1407.8,977.4 1414.7,961.3 1422.2,955.4 1429.1,954.5 1437.4,945.5 1444.2,950.3 1451.1,962.7 1459.4,966.1 1466.3,975.1 1474.5,974.4 1481.8,996.7" fill="none" stroke="#ff0000" stroke-width="1" shape-rendering="crispEdges"/><polyline points="9.0,1041.8 23.3,1034.2 30.9,1036.4 38.0,1034.2 45.1,1035.9 54.6,1028.8 62.9,1025.2 68.9,1024.0 76.0,1026.4 83.1,1024.5 89.0,1025.2 96.2,1021.2 104.5,1019.3 112.8,1017.4 120.0,1018.8 128.3,1017.4 140.1,1021.2 154.4,1017.4 163.9,1010.2 171.0,1009.3 178.1,1011.4 185.3,1009.8 194.8,1011.4 201.9,1009.3 213.8,1008.3 230.4,1008.3 237.5,1009.8 247.0,1012.1 253.0,1015.7 261.3,1015.7 270.8,1018.8 281.5,1022.8 289.8,1023.3 296.9,1026.4 311.2,1026.4 318.3,1023.3 325.4,1026.9 334.9,1029.2 342.0,1028.3 349.2,1025.2 356.3,1018.8 363.4,1018.8 370.5,1022.8 378.3,1037.1 385.4,1030.4 393.8,1035.9 399.7,1034.7 408.0,1028.8 415.1,1029.5 422.3,1032.3 429.4,1028.8 436.5,1026.9 446.0,1020.4 453.1,1021.6 459.8,1028.8 467.4,1025.2 474.5,1025.9 482.8,1029.9 488.8,1028.3 497.1,1031.1 504.2,1029.2 524.4,1029.2 526.8,1029.9 535.1,1023.3 541.0,1026.4 548.1,1024.7 556.5,1029.9 571.9,1028.0 577.8,1020.9 585.0,1016.9 594.5,1021.2 601.6,1019.7 608.7,1015.7 617.0,1019.7 624.2,1024.0 630.1,1027.1 637.2,1027.6 645.5,1033.0 652.7,1033.5 659.8,1040.6 666.9,1043.0 674.0,1043.0 681.2,1032.3 689.5,1028.3 695.4,1029.9 703.7,1039.4 710.9,1041.8 719.2,1046.1 725.1,1038.3 733.4,1034.0 741.7,1032.3 748.6,1035.4 755.7,1032.3 768.8,1035.2 779.4,1035.2 785.4,1032.3 792.5,1031.6 799.6,1035.9 808.0,1039.4 815.1,1038.3 822.2,1033.5 829.3,1034.2 837.6,1028.8 843.6,1027.6 851.9,1023.3 860.2,1022.8 867.3,1021.2 880.4,1020.4 889.9,1024.5 901.8,1022.3 916.0,1025.2 925.5,1026.9 932.6,1025.7 946.9,1030.7 955.2,1037.1 963.5,1029.2 970.7,1028.0 980.2,1024.5 984.9,1020.4 995.6,1020.4 1000.3,1021.6 1006.3,1020.4 1014.6,1021.6 1021.7,1020.4 1030.0,1023.3 1036.0,1022.3 1044.3,1025.7 1051.4,1024.5 1060.9,1016.4 1065.7,1015.7 1075.2,1011.4 1082.3,1014.5 1088.2,1019.7 1096.6,1032.3 1102.5,1033.5 1109.6,1035.4 1116.7,1033.5 1120.0,1033.0 1134.3,1032.3 1141.4,1029.2 1150.9,1028.0 1163.9,1025.2 1169.9,1022.3 1180.6,1022.3 1186.5,1023.3 1193.6,1020.4 1204.3,1017.4 1211.4,1016.2 1222.1,1017.4 1229.3,1020.4 1236.4,1019.3 1244.7,1026.4 1253.0,1018.5 1260.1,1023.3 1267.3,1024.5 1274.4,1025.7 1281.5,1022.3 1291.0,1020.0 1299.3,1017.4 1307.6,1015.7 1321.9,1014.5 1330.2,1013.3 1338.5,1012.1 1346.8,1015.0 1355.2,1033.0 1363.5,1033.0 1371.8,1040.6 1376.5,1042.3 1384.8,1038.3 1390.8,1037.5 1400.3,1029.2 1408.6,1029.2 1414.5,1031.6 1422.8,1025.2 1428.8,1028.0 1437.1,1029.9 1446.6,1034.2 1451.3,1035.2 1462.0,1035.2 1465.6,1036.4 1470.4,1035.2 1475.1,1035.4 1481.0,1038.3" fill="none" stroke="#ff0000" stroke-width="1" shape-rendering="crispEdges"/><rect x="2" y="1015" width="1480" height="1" fill="#0000ff" shape-rendering="crispEdges"/></svg><div class="a" style="left:0;top:1115px;width:1600px;height:22px;background:#777;border-right:2px solid #3a3a3a"></div><div class="a" style="left:0;top:1137px;width:1600px;height:1px;background:#111"></div><div class="a" style="left:0;top:1138px;width:1600px;height:22px;background:#8a8a8a"></div><div class="a" style="left:1px;top:1115px;width:6px;height:22px;background:#6a6a6a"></div><div class="a" style="left:7px;top:1115px;width:64px;height:20px;background:linear-gradient(#ececec,#c2c2c2);border:1px solid #3a3a3a;border-top:none;border-radius:0 0 4px 4px"></div><div class="t" style="left:7px;top:1119.03px;width:64px;text-align:center;font-size:10.6px;color:#111;font-weight:normal">MSFT Day1</div><div class="a" style="left:74px;top:1115px;width:56px;height:20px;background:linear-gradient(#ececec,#c2c2c2);border:1px solid #3a3a3a;border-top:none;border-radius:0 0 4px 4px"></div><div class="t" style="left:74px;top:1119.03px;width:56px;text-align:center;font-size:10.6px;color:#111;font-weight:normal">Back Test</div><div class="a" style="left:132px;top:1115px;width:37px;height:20px;background:linear-gradient(#ececec,#c2c2c2);border:1px solid #3a3a3a;border-top:none;border-radius:0 0 4px 4px"></div><div class="t" style="left:132px;top:1119.03px;width:37px;text-align:center;font-size:10.6px;color:#111;font-weight:normal">Forex</div><div class="a" style="left:172px;top:1115px;width:73px;height:20px;background:linear-gradient(#d6d6d6,#a8a8a8);border:1px solid #3a3a3a;border-top:none;border-radius:0 0 4px 4px"></div><div class="t" style="left:172px;top:1119.03px;width:73px;text-align:center;font-size:10.6px;color:#111;font-weight:bold">GOOG Day1</div><div class="a" style="left:248px;top:1115px;width:103px;height:20px;background:linear-gradient(#ececec,#c2c2c2);border:1px solid #3a3a3a;border-top:none;border-radius:0 0 4px 4px"></div><div class="t" style="left:248px;top:1119.03px;width:103px;text-align:center;font-size:10.6px;color:#111;font-weight:normal">Genetic Engineering</div><div class="t" style="left:5px;top:1143px;font-size:12px;color:#111">GOOG | 18.10.2016 7:00:00 | Close: 795,26 | Bar: 129 | Y: 727,06</div><div class="t" style="left:1488px;top:1143.5px;font-size:12px;color:#111">05:30:37</div><div class="a" style="left:107px;top:105px;width:321px;height:386px;background:#5f5f5f;border:1px solid #4a4a4a;border-top:none"></div><div class="a" style="left:107px;top:105px;width:321px;height:25px;background:#fff"></div><div class="t" style="left:110px;top:110.84px;font-size:12px;color:#999;">Map Indicator Turns To Chart</div><div class="a" style="left:308px;top:117px;width:10px;height:1px;background:#888"></div><div class="a" style="left:353px;top:112px;width:10px;height:10px;border:1px solid #ddd"></div><svg class="a" style="left:398px;top:112px" width="11" height="11"><path d="M0.5 0.5L10.5 10.5M10.5 0.5L0.5 10.5" stroke="#666" stroke-width="1"/></svg><div class="a" style="left:123px;top:146px;width:283px;height:243px;border:1px solid #111"></div><div class="a" style="left:127px;top:140px;width:96px;height:12px;background:#5f5f5f"></div><div class="t" style="left:129px;top:142.33px;font-size:10.6px;color:#0a0a0a;">Mapping Parameter</div><div class="t" style="left:133px;top:166.16px;font-size:10.8px;color:#0a0a0a;">Source Chart</div><div class="a" style="left:131px;top:181px;width:263px;height:20px;background:#888;border:1px solid #111"></div><div class="a" style="left:375px;top:182px;width:18px;height:18px;background:linear-gradient(#e4e4e4,#b9b9b9);border-left:1px solid #555"></div><svg class="a" style="left:380px;top:189px" width="8" height="5"><path d="M0 0H8L4 4Z" fill="#000"/></svg><div class="t" style="left:138px;top:185.86px;font-size:10.8px;color:#fff;">MSFT&nbsp;&nbsp;1 250</div><div class="t" style="left:133px;top:205.86px;font-size:10.8px;color:#0a0a0a;">Source Series</div><div class="a" style="left:131px;top:221px;width:263px;height:21px;background:#888;border:1px solid #111"></div><div class="a" style="left:375px;top:222px;width:18px;height:19px;background:linear-gradient(#e4e4e4,#b9b9b9);border-left:1px solid #555"></div><svg class="a" style="left:380px;top:229px" width="8" height="5"><path d="M0 0H8L4 4Z" fill="#000"/></svg><div class="t" style="left:138px;top:225.86px;font-size:10.8px;color:#fff;">MSFT.open</div><div class="t" style="left:133px;top:256.86px;font-size:10.8px;color:#0a0a0a;">Destination Chart</div><div class="a" style="left:131px;top:272px;width:263px;height:20px;background:#888;border:1px solid #111"></div><div class="a" style="left:375px;top:273px;width:18px;height:18px;background:linear-gradient(#e4e4e4,#b9b9b9);border-left:1px solid #555"></div><svg class="a" style="left:380px;top:280px" width="8" height="5"><path d="M0 0H8L4 4Z" fill="#000"/></svg><div class="t" style="left:138px;top:276.86px;font-size:10.8px;color:#fff;">MSFT&nbsp;&nbsp;1 250</div><div class="a" style="left:133px;top:300px;width:14px;height:14px;background:#8c8c8c;border:1px solid #222"></div><svg class="a" style="left:135px;top:303px" width="10" height="8"><path d="M1 4L4 7L9 1" stroke="#fff" stroke-width="1.6" fill="none"/></svg><div class="t" style="left:150px;top:300.36px;font-size:10.8px;color:#0a0a0a;">Inverse Mapping</div><div class="a" style="left:133px;top:322px;width:14px;height:14px;background:#8c8c8c;border:1px solid #222"></div><svg class="a" style="left:135px;top:325px" width="10" height="8"><path d="M1 4L4 7L9 1" stroke="#fff" stroke-width="1.6" fill="none"/></svg><div class="t" style="left:150px;top:322.36px;font-size:10.8px;color:#0a0a0a;">Draw Lines</div><div class="a" style="left:133px;top:344px;width:14px;height:14px;background:#8c8c8c;border:1px solid #222"></div><svg class="a" style="left:135px;top:347px" width="10" height="8"><path d="M1 4L4 7L9 1" stroke="#fff" stroke-width="1.6" fill="none"/></svg><div class="t" style="left:150px;top:344.36px;font-size:10.8px;color:#0a0a0a;">Show Trade Statistics</div><div class="a" style="left:133px;top:366px;width:14px;height:14px;background:#8c8c8c;border:1px solid #222"></div><svg class="a" style="left:135px;top:369px" width="10" height="8"><path d="M1 4L4 7L9 1" stroke="#fff" stroke-width="1.6" fill="none"/></svg><div class="t" style="left:150px;top:366.36px;font-size:10.8px;color:#0a0a0a;">Use Open (not Close)</div><div class="a" style="left:309px;top:298px;width:85px;height:20px;background:linear-gradient(#e2e2e2,#c2c2c2);border:1px solid #1a1a1a"></div><div class="t" style="left:309px;top:302.5px;width:85px;text-align:center;font-size:10.8px;color:#0a0a0a">Remove Turns</div><div class="t" style="left:300px;top:367.86px;font-size:10.8px;color:#0a0a0a;">Shift Plot</div><div class="a" style="left:355px;top:363px;width:39px;height:20px;background:#7a7a7a;border:1px solid #111;box-shadow:inset 0 0 0 1px #8c8c8c"></div><div class="t" style="left:357px;top:367.86px;font-size:10.8px;color:#ddd;">0</div><div class="a" style="left:375px;top:365px;width:17px;height:16px;background:#5f5f5f;border:1px solid #111"></div><div class="a" style="left:376px;top:372px;width:15px;height:2px;background:#111"></div><svg class="a" style="left:376px;top:366px" width="15" height="14"><path d="M3.5 5H11.5L7.5 1.5Z M3.5 9H11.5L7.5 12.5Z" fill="#000"/></svg><div class="a" style="left:126px;top:403px;width:280px;height:40px;border:1px solid #111"></div><div class="a" style="left:130px;top:397px;width:128px;height:12px;background:#5f5f5f"></div><div class="t" style="left:132px;top:398.86px;font-size:10.8px;color:#0a0a0a;">Realtime Mapping Service</div><div class="a" style="left:140px;top:418px;width:13px;height:13px;border-radius:50%;background:#8c8c8c;border:1px solid #222"></div><div class="t" style="left:157px;top:417.86px;font-size:10.8px;color:#0a0a0a;">ON</div><div class="a" style="left:198px;top:418px;width:13px;height:13px;border-radius:50%;background:#8c8c8c;border:1px solid #222"></div><div class="a" style="left:202px;top:422px;width:5px;height:5px;border-radius:50%;background:#000"></div><div class="t" style="left:216px;top:417.86px;font-size:10.8px;color:#0a0a0a;">OFF</div><div class="a" style="left:302px;top:414px;width:85px;height:20px;background:#404040;border:1px solid #111"></div><div class="t" style="left:302px;top:418px;width:85px;text-align:center;font-size:10.8px;color:#7c7c7c;overflow:hidden">Show RT Result</div><div class="a" style="left:123px;top:457px;width:111px;height:20px;background:linear-gradient(#e2e2e2,#c2c2c2);border:1px solid #1a1a1a"></div><div class="t" style="left:123px;top:461.5px;width:111px;text-align:center;font-size:10.8px;color:#0a0a0a">Map Turns</div><div class="a" style="left:321px;top:457px;width:85px;height:20px;background:linear-gradient(#e2e2e2,#c2c2c2);border:1px solid #1a1a1a"></div><div class="t" style="left:321px;top:461.5px;width:85px;text-align:center;font-size:10.8px;color:#0a0a0a">Close</div><div class="a" style="left:598px;top:96px;width:340px;height:822px;background:#fff;border:1px solid #9a9a9a;border-top:none"></div><svg class="a" style="left:607px;top:103px" width="16" height="16"><rect width="16" height="16" fill="#06101c"/><path d="M0 12 L2 10 L4 13 L6 9 L8 12 L10 8 L12 11 L14 9 L16 11" stroke="#2aa8d8" stroke-width="1.2" fill="none"/><path d="M3 2 L3 14" stroke="#2244aa" stroke-width="1.5"/></svg><div class="t" style="left:628px;top:105.34px;font-size:12px;color:#000;">Signal Statistics</div><div class="a" style="left:819px;top:111px;width:10px;height:1px;background:#000"></div><div class="a" style="left:863px;top:106px;width:10px;height:10px;border:1px solid #000"></div><svg class="a" style="left:908px;top:105px" width="12" height="12"><path d="M1 1L11 11M11 1L1 11" stroke="#000" stroke-width="1"/></svg><div class="a" style="left:599px;top:127px;width:338px;height:24px;background:#f0f0f0"></div><div class="a" style="left:600px;top:129px;width:61px;height:23px;background:linear-gradient(#dedede,#8e8e8e);border:1px solid #222;border-bottom:none;border-radius:5px 5px 0 0"></div><div class="t" style="left:600px;top:135.03px;width:61px;text-align:center;font-size:10.6px;color:#111">Signal List</div><div class="a" style="left:662px;top:131px;width:82px;height:21px;background:linear-gradient(#f4f4f4,#c8c8c8);border:1px solid #222;border-bottom:none;border-radius:5px 5px 0 0"></div><div class="t" style="left:662px;top:137.33px;width:82px;text-align:center;font-size:10.6px;color:#111">Trade Statistics</div><div class="a" style="left:746px;top:131px;width:44px;height:21px;background:linear-gradient(#f4f4f4,#c8c8c8);border:1px solid #222;border-bottom:none;border-radius:5px 5px 0 0"></div><div class="t" style="left:746px;top:137.33px;width:44px;text-align:center;font-size:10.6px;color:#111">Trades</div><div class="a" style="left:791px;top:131px;width:71px;height:21px;background:linear-gradient(#f4f4f4,#c8c8c8);border:1px solid #222;border-bottom:none;border-radius:5px 5px 0 0"></div><div class="t" style="left:791px;top:137.33px;width:71px;text-align:center;font-size:10.6px;color:#111">Equity Curve</div><div class="a" style="left:602px;top:132px;width:57px;height:19px;border:1px dotted #222"></div><div class="a" style="left:599px;top:151px;width:338px;height:766px;border:1px solid #000;background:#5c5c5c"></div><div class="a" style="left:604px;top:157px;width:328px;height:755px;background:#fff"></div><div class="t" style="left:611px;top:164.93px;font-size:10.6px;color:#000;">Date</div><div class="t" style="left:778px;top:164.93px;font-size:10.6px;color:#000;">Signal</div><div class="t" style="left:877px;top:164.93px;font-size:10.6px;color:#000;">Price</div><div class="a" style="left:771px;top:158px;width:1px;height:24px;background:#e4e4e4"></div><div class="a" style="left:870px;top:158px;width:1px;height:24px;background:#e4e4e4"></div><div class="a" style="left:655px;top:158px;width:61px;height:20px;background:linear-gradient(#ececec,#d8d8d8);border:1px solid #555"></div><div class="t" style="left:662px;top:163.53px;font-size:10.6px;color:#000;">Clipboard</div><div class="a" style="left:0;top:0"><div class="t tr" style="left:611px;top:185.36px">19.04.2016 7:00:00</div><div class="t tr" style="left:778px;top:185.36px">BOTTOM</div><div class="t tr" style="left:877px;top:185.36px">56,63</div><div class="t tr" style="left:611px;top:202.36px">25.04.2016 7:00:00</div><div class="t tr" style="left:778px;top:202.36px">TOP</div><div class="t tr" style="left:877px;top:202.36px">51,78</div><div class="t tr" style="left:611px;top:219.36px">26.04.2016 7:00:00</div><div class="t tr" style="left:778px;top:219.36px">BOTTOM</div><div class="t tr" style="left:877px;top:219.36px">52,26</div><div class="t tr" style="left:611px;top:236.36px">29.04.2016 7:00:00</div><div class="t tr" style="left:778px;top:236.36px">TOP</div><div class="t tr" style="left:877px;top:236.36px">49,35</div><div class="t tr" style="left:611px;top:253.36px">03.05.2016 7:00:00</div><div class="t tr" style="left:778px;top:253.36px">BOTTOM</div><div class="t tr" style="left:877px;top:253.36px">50,34</div><div class="t tr" style="left:611px;top:270.36px">04.05.2016 7:00:00</div><div class="t tr" style="left:778px;top:270.36px">TOP</div><div class="t tr" style="left:877px;top:270.36px">49,84</div><div class="t tr" style="left:611px;top:287.36px">09.05.2016 7:00:00</div><div class="t tr" style="left:778px;top:287.36px">BOTTOM</div><div class="t tr" style="left:877px;top:287.36px">50,49</div><div class="t tr" style="left:611px;top:304.36px">10.05.2016 7:00:00</div><div class="t tr" style="left:778px;top:304.36px">TOP</div><div class="t tr" style="left:877px;top:304.36px">50,33</div><div class="t tr" style="left:611px;top:321.36px">13.05.2016 7:00:00</div><div class="t tr" style="left:778px;top:321.36px">BOTTOM</div><div class="t tr" style="left:877px;top:321.36px">51,44</div><div class="t tr" style="left:611px;top:338.36px">16.05.2016 7:00:00</div><div class="t tr" style="left:778px;top:338.36px">TOP</div><div class="t tr" style="left:877px;top:338.36px">50,8</div><div class="t tr" style="left:611px;top:355.36px">17.05.2016 7:00:00</div><div class="t tr" style="left:778px;top:355.36px">BOTTOM</div><div class="t tr" style="left:877px;top:355.36px">51,72</div><div class="t tr" style="left:611px;top:372.36px">19.05.2016 7:00:00</div><div class="t tr" style="left:778px;top:372.36px">TOP</div><div class="t tr" style="left:877px;top:372.36px">50,47</div><div class="t tr" style="left:611px;top:389.36px">26.05.2016 7:00:00</div><div class="t tr" style="left:778px;top:389.36px">BOTTOM</div><div class="t tr" style="left:877px;top:389.36px">51,93</div><div class="t tr" style="left:611px;top:406.36px">27.05.2016 7:00:00</div><div class="t tr" style="left:778px;top:406.36px">TOP</div><div class="t tr" style="left:877px;top:406.36px">51,92</div><div class="t tr" style="left:611px;top:423.36px">02.06.2016 7:00:00</div><div class="t tr" style="left:778px;top:423.36px">BOTTOM</div><div class="t tr" style="left:877px;top:423.36px">52,64</div><div class="t tr" style="left:611px;top:440.36px">06.06.2016 7:00:00</div><div class="t tr" style="left:778px;top:440.36px">TOP</div><div class="t tr" style="left:877px;top:440.36px">51,99</div><div class="t tr" style="left:611px;top:457.36px">07.06.2016 7:00:00</div><div class="t tr" style="left:778px;top:457.36px">BOTTOM</div><div class="t tr" style="left:877px;top:457.36px">52,24</div><div class="t tr" style="left:611px;top:474.36px">13.06.2016 7:00:00</div><div class="t tr" style="left:778px;top:474.36px">TOP</div><div class="t tr" style="left:877px;top:474.36px">49,58</div><div class="t tr" style="left:611px;top:491.36px">14.06.2016 7:00:00</div><div class="t tr" style="left:778px;top:491.36px">BOTTOM</div><div class="t tr" style="left:877px;top:491.36px">49,9</div><div class="t tr" style="left:611px;top:508.36px">16.06.2016 7:00:00</div><div class="t tr" style="left:778px;top:508.36px">TOP</div><div class="t tr" style="left:877px;top:508.36px">49,52</div><div class="t tr" style="left:611px;top:525.36px">20.06.2016 7:00:00</div><div class="t tr" style="left:778px;top:525.36px">BOTTOM</div><div class="t tr" style="left:877px;top:525.36px">50,64</div><div class="t tr" style="left:611px;top:542.36px">21.06.2016 7:00:00</div><div class="t tr" style="left:778px;top:542.36px">TOP</div><div class="t tr" style="left:877px;top:542.36px">50,2</div><div class="t tr" style="left:611px;top:559.36px">23.06.2016 7:00:00</div><div class="t tr" style="left:778px;top:559.36px">BOTTOM</div><div class="t tr" style="left:877px;top:559.36px">51,28</div><div class="t tr" style="left:611px;top:576.36px">28.06.2016 7:00:00</div><div class="t tr" style="left:778px;top:576.36px">TOP</div><div class="t tr" style="left:877px;top:576.36px">48,92</div><div class="t tr" style="left:611px;top:593.36px">01.07.2016 7:00:00</div><div class="t tr" style="left:778px;top:593.36px">BOTTOM</div><div class="t tr" style="left:877px;top:593.36px">51,13</div><div class="t tr" style="left:611px;top:610.36px">06.07.2016 7:00:00</div><div class="t tr" style="left:778px;top:610.36px">TOP</div><div class="t tr" style="left:877px;top:610.36px">50,78</div><div class="t tr" style="left:611px;top:627.36px">15.07.2016 7:00:00</div><div class="t tr" style="left:778px;top:627.36px">BOTTOM</div><div class="t tr" style="left:877px;top:627.36px">53,95</div><div class="t tr" style="left:611px;top:644.36px">18.07.2016 7:00:00</div><div class="t tr" style="left:778px;top:644.36px">TOP</div><div class="t tr" style="left:877px;top:644.36px">53,7</div><div class="t tr" style="left:611px;top:661.36px">20.07.2016 7:00:00</div><div class="t tr" style="left:778px;top:661.36px">BOTTOM</div><div class="t tr" style="left:877px;top:661.36px">56,15</div><div class="t tr" style="left:611px;top:678.36px">21.07.2016 7:00:00</div><div class="t tr" style="left:778px;top:678.36px">TOP</div><div class="t tr" style="left:877px;top:678.36px">55,98</div><div class="t tr" style="left:611px;top:695.36px">27.07.2016 7:00:00</div><div class="t tr" style="left:778px;top:695.36px">BOTTOM</div><div class="t tr" style="left:877px;top:695.36px">56,61</div><div class="t tr" style="left:611px;top:712.36px">28.07.2016 7:00:00</div><div class="t tr" style="left:778px;top:712.36px">TOP</div><div class="t tr" style="left:877px;top:712.36px">56</div><div class="t tr" style="left:611px;top:729.36px">02.08.2016 7:00:00</div><div class="t tr" style="left:778px;top:729.36px">BOTTOM</div><div class="t tr" style="left:877px;top:729.36px">56,85</div><div class="t tr" style="left:611px;top:746.36px">03.08.2016 7:00:00</div><div class="t tr" style="left:778px;top:746.36px">TOP</div><div class="t tr" style="left:877px;top:746.36px">56,68</div><div class="t tr" style="left:611px;top:763.36px">09.08.2016 7:00:00</div><div class="t tr" style="left:778px;top:763.36px">BOTTOM</div><div class="t tr" style="left:877px;top:763.36px">58,17</div><div class="t tr" style="left:611px;top:780.36px">18.08.2016 7:00:00</div><div class="t tr" style="left:778px;top:780.36px">TOP</div><div class="t tr" style="left:877px;top:780.36px">57,42</div><div class="t tr" style="left:611px;top:797.36px">23.08.2016 7:00:00</div><div class="t tr" style="left:778px;top:797.36px">BOTTOM</div><div class="t tr" style="left:877px;top:797.36px">57,9</div><div class="t tr" style="left:611px;top:814.36px">24.08.2016 7:00:00</div><div class="t tr" style="left:778px;top:814.36px">TOP</div><div class="t tr" style="left:877px;top:814.36px">57,8</div><div class="t tr" style="left:611px;top:831.36px">26.08.2016 7:00:00</div><div class="t tr" style="left:778px;top:831.36px">BOTTOM</div><div class="t tr" style="left:877px;top:831.36px">58,28</div><div class="t tr" style="left:611px;top:848.36px">01.09.2016 7:00:00</div><div class="t tr" style="left:778px;top:848.36px">TOP</div><div class="t tr" style="left:877px;top:848.36px">57,01</div><div class="t tr" style="left:611px;top:865.36px">06.09.2016 7:00:00</div><div class="t tr" style="left:778px;top:865.36px">BOTTOM</div><div class="t tr" style="left:877px;top:865.36px">57,78</div><div class="t tr" style="left:611px;top:882.36px">07.09.2016 7:00:00</div><div class="t tr" style="left:778px;top:882.36px">TOP</div><div class="t tr" style="left:877px;top:882.36px">57,47</div></div><div class="a" style="left:604px;top:198px;width:310px;height:1px;background:#f0f0f0"></div><div class="a" style="left:604px;top:215px;width:310px;height:1px;background:#f0f0f0"></div><div class="a" style="left:604px;top:232px;width:310px;height:1px;background:#f0f0f0"></div><div class="a" style="left:604px;top:249px;width:310px;height:1px;background:#f0f0f0"></div><div class="a" style="left:604px;top:266px;width:310px;height:1px;background:#f0f0f0"></div><div class="a" style="left:604px;top:283px;width:310px;height:1px;background:#f0f0f0"></div><div class="a" style="left:604px;top:300px;width:310px;height:1px;background:#f0f0f0"></div><div class="a" style="left:604px;top:317px;width:310px;height:1px;background:#f0f0f0"></div><div class="a" style="left:604px;top:334px;width:310px;height:1px;background:#f0f0f0"></div><div class="a" style="left:604px;top:351px;width:310px;height:1px;background:#f0f0f0"></div><div class="a" style="left:604px;top:368px;width:310px;height:1px;background:#f0f0f0"></div><div class="a" style="left:604px;top:385px;width:310px;height:1px;background:#f0f0f0"></div><div class="a" style="left:604px;top:402px;width:310px;height:1px;background:#f0f0f0"></div><div class="a" style="left:604px;top:419px;width:310px;height:1px;background:#f0f0f0"></div><div class="a" style="left:604px;top:436px;width:310px;height:1px;background:#f0f0f0"></div><div class="a" style="left:604px;top:453px;width:310px;height:1px;background:#f0f0f0"></div><div class="a" style="left:604px;top:470px;width:310px;height:1px;background:#f0f0f0"></div><div class="a" style="left:604px;top:487px;width:310px;height:1px;background:#f0f0f0"></div><div class="a" style="left:604px;top:504px;width:310px;height:1px;background:#f0f0f0"></div><div class="a" style="left:604px;top:521px;width:310px;height:1px;background:#f0f0f0"></div><div class="a" style="left:604px;top:538px;width:310px;height:1px;background:#f0f0f0"></div><div class="a" style="left:604px;top:555px;width:310px;height:1px;background:#f0f0f0"></div><div class="a" style="left:604px;top:572px;width:310px;height:1px;background:#f0f0f0"></div><div class="a" style="left:604px;top:589px;width:310px;height:1px;background:#f0f0f0"></div><div class="a" style="left:604px;top:606px;width:310px;height:1px;background:#f0f0f0"></div><div class="a" style="left:604px;top:623px;width:310px;height:1px;background:#f0f0f0"></div><div class="a" style="left:604px;top:640px;width:310px;height:1px;background:#f0f0f0"></div><div class="a" style="left:604px;top:657px;width:310px;height:1px;background:#f0f0f0"></div><div class="a" style="left:604px;top:674px;width:310px;height:1px;background:#f0f0f0"></div><div class="a" style="left:604px;top:691px;width:310px;height:1px;background:#f0f0f0"></div><div class="a" style="left:604px;top:708px;width:310px;height:1px;background:#f0f0f0"></div><div class="a" style="left:604px;top:725px;width:310px;height:1px;background:#f0f0f0"></div><div class="a" style="left:604px;top:742px;width:310px;height:1px;background:#f0f0f0"></div><div class="a" style="left:604px;top:759px;width:310px;height:1px;background:#f0f0f0"></div><div class="a" style="left:604px;top:776px;width:310px;height:1px;background:#f0f0f0"></div><div class="a" style="left:604px;top:793px;width:310px;height:1px;background:#f0f0f0"></div><div class="a" style="left:604px;top:810px;width:310px;height:1px;background:#f0f0f0"></div><div class="a" style="left:604px;top:827px;width:310px;height:1px;background:#f0f0f0"></div><div class="a" style="left:604px;top:844px;width:310px;height:1px;background:#f0f0f0"></div><div class="a" style="left:604px;top:861px;width:310px;height:1px;background:#f0f0f0"></div><div class="a" style="left:604px;top:878px;width:310px;height:1px;background:#f0f0f0"></div><div class="a" style="left:771px;top:182px;width:1px;height:713px;background:#f0f0f0"></div><div class="a" style="left:870px;top:182px;width:1px;height:713px;background:#f0f0f0"></div><div class="a" style="left:914px;top:157px;width:18px;height:755px;background:#f0f0f0"></div><div class="a" style="left:915px;top:175px;width:15px;height:238px;background:#cdcdcd"></div><svg class="a" style="left:917px;top:162px" width="11" height="8"><path d="M1 6L5.5 1.5L10 6" stroke="#606060" stroke-width="2" fill="none"/></svg><svg class="a" style="left:917px;top:882px" width="11" height="8"><path d="M1 1.5L5.5 6L10 1.5" stroke="#606060" stroke-width="2" fill="none"/></svg><div class="a" style="left:605px;top:895px;width:309px;height:16px;background:#f0f0f0"></div><div class="a" style="left:622px;top:895px;width:261px;height:15px;background:#cdcdcd"></div><svg class="a" style="left:609px;top:898px" width="8" height="11"><path d="M6 1L1.5 5.5L6 10" stroke="#606060" stroke-width="2" fill="none"/></svg><svg class="a" style="left:902px;top:898px" width="8" height="11"><path d="M2 1L6.5 5.5L2 10" stroke="#606060" stroke-width="2" fill="none"/></svg><svg class="a" style="left:1566px;top:1119px" width="30" height="14"><path d="M2.5 6H12.5L7.5 11Z" fill="#000"/><path d="M19.5 3L26.5 10M26.5 3L19.5 10" stroke="#000" stroke-width="1.3"/></svg><svg class="a" style="left:1570px;top:1052px" width="30" height="62"><path d="M30 5H12.5Q5.5 5 5.5 12V43.5L30 57Z" fill="#fff"/><rect x="9" y="11" width="20" height="20" fill="#0e8de8"/><circle cx="19" cy="21" r="8" fill="#fff"/><path d="M12.5 21H25.5" stroke="#0e8de8" stroke-width="2"/><path d="M11.5 21L15 18V24Z M26.5 21L23 18V24Z" fill="#0e8de8"/></svg><div class="t" id="wm" style="left:351px;top:1114px;font-family:'Liberation Serif',serif;font-style:italic;font-size:25px;color:#f22c2c;letter-spacing:2.7px;-webkit-text-stroke:0.6px #f22c2c;text-shadow:0 0 2px #fff,0 0 3px #fff,0 0 5px rgba(255,255,255,.8)">www.forex-warez.com, andreybbrv@gmail.com, Skype: andreybbrv</div></body></html>
